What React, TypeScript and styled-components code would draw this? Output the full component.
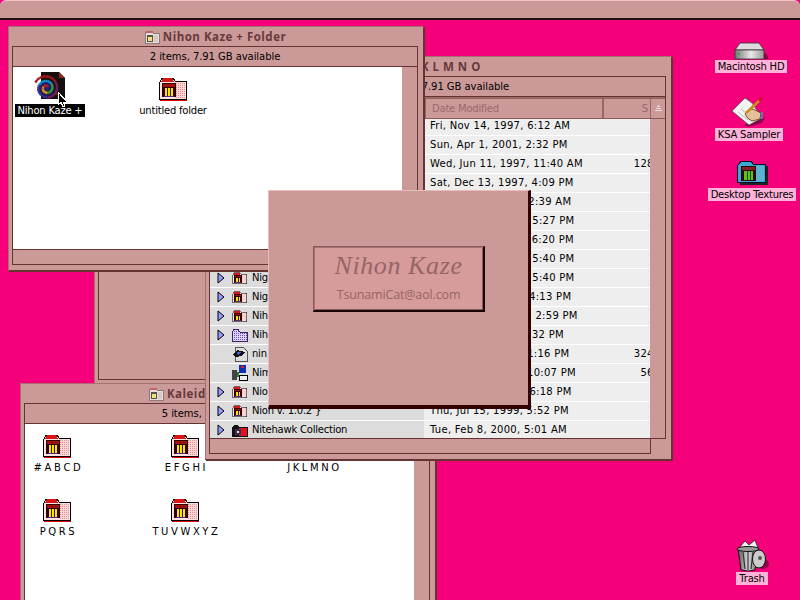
import React from "react";
import styled, { createGlobalStyle } from "styled-components";

const GlobalStyle = createGlobalStyle`
  html, body {
    margin: 0;
    padding: 0;
    width: 800px;
    height: 600px;
    overflow: hidden;
    background: #f5007a;
  }
  * { box-sizing: border-box; }
`;

const smallFont = `"DejaVu Sans", "Liberation Sans", sans-serif`;
const LINE = "#663333";
const BODY = "#cc9999";

const Desktop = styled.div`
  position: relative;
  width: 800px;
  height: 600px;
  overflow: hidden;
  background: #f5007a;
  font-family: ${smallFont};
  font-size: 10px;
  letter-spacing: -0.22px;
  color: #000;
`;

const MenuBar = styled.div`
  height: 20px;
  background: ${BODY};
  border-top: 1px solid #f0c4c4;
  border-bottom: 2px solid #221111;
  border-radius: 6px 6px 0 0;
`;

const Win = styled.div<{ $x: number; $y: number; $w: number; $h: number; $z: number }>`
  position: absolute;
  left: ${(p) => p.$x}px;
  top: ${(p) => p.$y}px;
  width: ${(p) => p.$w}px;
  height: ${(p) => p.$h}px;
  z-index: ${(p) => p.$z};
  display: flex;
  flex-direction: column;
  padding: 0 5px 5px 3px;
  background: ${BODY};
  border: 1px solid ${LINE};
  border-left-color: #a87070;
  border-top-color: #a87070;
  box-shadow: 1px 1px 0 ${LINE};
`;

const TitleBar = styled.div`
  height: 19px;
  flex: none;
  display: flex;
  align-items: center;
  justify-content: center;
  gap: 3px;
`;

const TitleText = styled.span`
  font-family: "Open Sans", "Liberation Sans", sans-serif;
  font-weight: 700;
  font-size: 11.5px;
  letter-spacing: 0.5px;
  color: #663a3a;
  white-space: pre;
`;

const Pane = styled.div`
  flex: 1;
  min-height: 0;
  display: flex;
  flex-direction: column;
  border: 1px solid ${LINE};
`;

const InfoBar = styled.div`
  height: 20px;
  flex: none;
  display: flex;
  align-items: center;
  justify-content: center;
  border-bottom: 1px solid ${LINE};
  letter-spacing: -0.06px;
  white-space: pre;
`;

const Body = styled.div`
  flex: 1;
  min-height: 0;
  display: flex;
`;

const WhiteArea = styled.div<{ $col: number; $gap: number }>`
  flex: 1;
  min-width: 0;
  background: #fff;
  display: grid;
  grid-template-columns: repeat(3, ${(p) => p.$col}px);
  grid-auto-rows: 64px;
  column-gap: ${(p) => p.$gap}px;
  align-content: start;
  padding-top: 9px;
  overflow: hidden;
`;

const ScrollTrack = styled.div`
  width: 15px;
  flex: none;
`;

const ScrollStrip = styled.div`
  height: 15px;
  flex: none;
  margin-right: 15px;
  border-left: 1px solid ${LINE};
  border-right: 1px solid ${LINE};
  border-bottom: 1px solid ${LINE};
`;

const FileItem = styled.div`
  display: flex;
  flex-direction: column;
  align-items: center;
`;

const IconSlot = styled.div`
  height: 25px;
  display: flex;
  align-items: flex-end;
  justify-content: center;
`;

const ItemLabel = styled.div<{ $selected?: boolean; $spaced?: boolean }>`
  margin-top: 3px;
  padding: 0 2px;
  height: 13px;
  line-height: 13px;
  white-space: pre;
  color: ${(p) => (p.$selected ? "#fff" : "#000")};
  background: ${(p) => (p.$selected ? "#000" : "transparent")};
  letter-spacing: ${(p) => (p.$spaced ? "-0.3px" : "inherit")};
`;

const Cursor = styled.svg`
  position: absolute;
  left: 57px;
  top: 92px;
  z-index: 9;
`;

/* list view */
const ColumnHeader = styled.div`
  height: 22px;
  flex: none;
  display: grid;
  grid-template-columns: 214px 178px 48px 1fr;
  border-top: 2px solid #996666;
  border-bottom: 1px solid #8a5a5a;
  color: #996a6a;
`;

const HeaderCell = styled.div<{ $end?: boolean }>`
  display: flex;
  align-items: center;
  padding: ${(p) => (p.$end ? "0 2px 0 0" : "0 0 0 6px")};
  justify-content: ${(p) => (p.$end ? "flex-end" : "flex-start")};
  border-left: 2px solid #996666;
  overflow: hidden;
`;

const SortCell = styled.div`
  display: flex;
  align-items: center;
  justify-content: center;
  border-left: 1px solid #996666;
`;

const ListClip = styled.div`
  flex: 1;
  min-width: 0;
  overflow: hidden;
`;

const RowStack = styled.div`
  margin-top: -2px;
`;

const Row = styled.div`
  width: 454px;
  height: 19px;
  display: grid;
  grid-template-columns: 214px 178px 62px;
  border-bottom: 1px solid #fff;
  line-height: 18px;
`;

const NameCell = styled.div`
  background: #dcdcdc;
  display: flex;
  align-items: center;
  overflow: hidden;
  white-space: pre;
`;

const Disclosure = styled.div`
  width: 22px;
  flex: none;
  padding-left: 7px;
  display: flex;
  align-items: center;
`;

const RowIcon = styled.div`
  width: 16px;
  height: 16px;
  flex: none;
  display: flex;
  align-items: center;
  justify-content: center;
  margin-right: 4px;
`;

const DateCell = styled.div`
  background: #eeeeee;
  padding-left: 6px;
  letter-spacing: 0.28px;
  white-space: pre;
`;

const SizeCell = styled.div`
  background: #eeeeee;
  text-align: right;
  letter-spacing: 0.28px;
  white-space: pre;
`;

/* about box */
const AboutBox = styled.div`
  position: absolute;
  left: 268px;
  top: 190px;
  width: 263px;
  height: 219px;
  z-index: 8;
  display: flex;
  justify-content: center;
  padding: 55px 0 0 1px;
  background: #cc9999;
  border-left: 1px solid #eebbbb;
  border-top: 1px solid #eebbbb;
  border-right: 3px solid #330000;
  border-bottom: 4px solid #330000;
`;

const Plate = styled.div`
  width: 172px;
  height: 66px;
  display: flex;
  flex-direction: column;
  align-items: center;
  background: #d69b9b;
  border-top: 1px solid #8a5a5a;
  border-left: 1px solid #8a5a5a;
  border-right: 2px solid #1a0505;
  border-bottom: 2px solid #1a0505;
  box-shadow: inset 1px 1px 0 #a87070, inset -1px -1px 0 #8a5a5a;
`;

const PlateTitle = styled.div`
  font-family: "Liberation Serif", serif;
  font-style: italic;
  font-size: 26px;
  line-height: 30px;
  letter-spacing: 0.6px;
  color: #966666;
  margin-top: 4px;
`;

const PlateMail = styled.div`
  font-family: "Open Sans", "Liberation Sans", sans-serif;
  font-size: 12.5px;
  line-height: 16px;
  letter-spacing: -0.15px;
  color: #966666;
  margin-top: 6px;
`;

/* desktop icons */
const DeskIcon = styled.div<{ $x: number; $y: number }>`
  position: absolute;
  left: ${(p) => p.$x}px;
  top: ${(p) => p.$y}px;
  width: 100px;
  display: flex;
  flex-direction: column;
  align-items: center;
`;

const DeskLabel = styled.div<{ $top: number }>`
  margin-top: ${(p) => p.$top}px;
  height: 13px;
  line-height: 13px;
  padding: 0 3px;
  background: #ffb3d9;
  white-space: pre;
`;

const Pixel = styled.svg`
  display: block;
  flex: none;
`;

const FolderIcon: React.FC<{ id: string; w?: number }> = ({ id, w = 30 }) => (
  <Pixel width={w} height={(w * 24) / 30} viewBox="0 0 30 24" shapeRendering="crispEdges">
    <defs>
      <pattern id={id} width="2" height="2" patternUnits="userSpaceOnUse">
        <rect width="2" height="2" fill="#f8d8d8" />
        <rect width="1" height="1" fill="#e88" />
      </pattern>
    </defs>
    <path d="M2 8 L5 3 H17 V5 H29 V24 H2Z" fill="#e00000" />
    <path d="M1 7 L4 1 H15 L17 4 H28 V22 H1Z" fill="#fbe4e4" stroke="#000" />
    <rect x="17" y="5" width="10" height="16" fill={`url(#${id})`} />
    <path d="M5 1 H14 L16 5 H3Z" fill="#d81818" />
    <rect x="4" y="6" width="14" height="14" fill="#300" />
    <rect x="5" y="7" width="12" height="3" fill="#a01010" />
    <rect x="7" y="11" width="8" height="8" fill="#ffe000" />
    <rect x="9" y="11" width="1" height="8" fill="#222" />
    <rect x="12" y="11" width="1" height="8" fill="#222" />
    <rect x="6" y="19" width="10" height="1" fill="#5a2a7a" />
  </Pixel>
);

const GreyFolder: React.FC = () => (
  <Pixel width="16" height="14" viewBox="0 0 16 14" shapeRendering="crispEdges">
    <path d="M1 4 L3 1 H8 L9 3 H15 V13 H1Z" fill="#e8dcdc" stroke="#8a7a7a" />
    <rect x="3" y="1" width="5" height="2" fill="#d06060" />
    <rect x="3" y="5" width="6" height="7" fill="#554" />
    <rect x="4" y="7" width="4" height="4" fill="#f0e080" />
    <rect x="10" y="5" width="4" height="7" fill="#d8c8c8" />
  </Pixel>
);

const PurpleFolder: React.FC = () => (
  <Pixel width="16" height="13" viewBox="0 0 16 13" shapeRendering="crispEdges">
    <defs>
      <pattern id="pd" width="2" height="2" patternUnits="userSpaceOnUse">
        <rect width="2" height="2" fill="#ddd0ff" />
        <rect width="1" height="1" fill="#6a50b0" />
      </pattern>
    </defs>
    <path d="M0.5 12.5 V2.5 L2 0.5 H6 L8 3 H15.5 V12.5Z" fill="url(#pd)" stroke="#402060" />
  </Pixel>
);

const RedFolder: React.FC = () => (
  <Pixel width="16" height="13" viewBox="0 0 16 13" shapeRendering="crispEdges">
    <path d="M0 13 V3 L2 1 H6 L7 3 H16 V13Z" fill="#111" />
    <rect x="7" y="4" width="8" height="8" fill="#e01020" />
    <rect x="3" y="5" width="6" height="6" fill="#403050" />
    <rect x="5" y="7" width="2" height="2" fill="#ddd" />
  </Pixel>
);

const DiscFile: React.FC = () => (
  <Pixel width="16" height="16" viewBox="0 0 16 16" shapeRendering="crispEdges">
    <path d="M3 1 H11 L15 5 V15 H3Z" fill="#ddd" stroke="#555" />
    <path d="M1 8 L5 4 L13 6 L10 10 L3 11Z" fill="#111" />
    <path d="M5 6 L10 6 L6 9Z" fill="#4060d0" />
  </Pixel>
);

const AppFile: React.FC = () => (
  <Pixel width="16" height="16" viewBox="0 0 16 16" shapeRendering="crispEdges">
    <rect x="0" y="5" width="5" height="10" fill="#444" />
    <rect x="7" y="10" width="8" height="5" fill="#eee" stroke="#000" />
    <rect x="7" y="0" width="7" height="8" fill="#1030b0" />
    <rect x="9" y="1" width="3" height="2" fill="#d02020" />
    <rect x="5" y="7" width="2" height="5" fill="#208030" />
  </Pixel>
);

// rainbow swirl built from short arcs, outer tail first
const swirlColors = ["#a01a1a", "#7a1a60", "#3a2a90", "#1090d0", "#30a030", "#f0a010", "#d02020", "#3a2a90"];
const swirl = Array.from({ length: 64 }, (_, i) => {
  const point = (n: number) => {
    const t = n * 0.26;
    const r = 12.5 - n * 0.19;
    return `${(14.5 + r * Math.cos(t + 3.6)).toFixed(1)} ${(17 + r * Math.sin(t + 3.6)).toFixed(1)}`;
  };
  return { d: `M${point(i)} L${point(i + 1)}`, color: swirlColors[Math.floor(i / 8)] };
});

const SpiralDoc: React.FC = () => (
  <Pixel width="36" height="30" viewBox="0 0 36 30">
    <path d="M9 1 H27 L33 7 V28 H9Z" fill="#151111" />
    <path d="M27 1 L33 7 H27Z" fill="#8a2a1a" />
    <rect x="22" y="22" width="7" height="2" fill="#5a3010" />
    <circle cx="14.5" cy="17" r="8" fill="#202060" />
    {swirl.map((s) => (
      <path key={s.d} d={s.d} stroke={s.color} strokeWidth="2.4" fill="none" />
    ))}
  </Pixel>
);

const ArrowCursor: React.FC = () => (
  <Cursor width="12" height="17" viewBox="0 0 12 17" shapeRendering="crispEdges">
    <path d="M1 0 V13 L4 10 L6 15 L8 14 L6 10 H10Z" fill="#000" stroke="#fff" strokeWidth="1" />
  </Cursor>
);

const DriveIcon: React.FC = () => (
  <Pixel width="34" height="18" viewBox="0 0 34 18">
    <defs>
      <linearGradient id="hd" x1="0" x2="1" y1="0" y2="0">
        <stop offset="0" stopColor="#777" />
        <stop offset="0.55" stopColor="#e8e8e8" />
        <stop offset="1" stopColor="#999" />
      </linearGradient>
    </defs>
    <path d="M28 8 L34 14 V17 H30Z" fill="#90004a" />
    <path d="M1 8 L6 1 H25 L30 8Z" fill="#ddd" stroke="#333" strokeWidth="0.8" />
    <rect x="1" y="8" width="29" height="9" fill="url(#hd)" stroke="#333" strokeWidth="0.8" />
    <rect x="4" y="11" width="2" height="2" fill="#20c020" />
  </Pixel>
);

const SamplerIcon: React.FC = () => (
  <Pixel width="34" height="30" viewBox="0 0 34 30">
    <path d="M12 28 L33 20 L30 26 L16 30Z" fill="#90004a" />
    <path d="M0 14 L13 1 L20 6 L30 21 L17 28Z" fill="#f4f4f4" stroke="#555" strokeWidth="0.8" />
    <path d="M6 15 L16 23 M9 12 L19 20" stroke="#bbb" strokeWidth="1" />
    <path d="M13 17 Q16 12 21 12 L29 16 L28 22 L20 24 Q15 22 13 17Z" fill="#e6c09a" stroke="#5a3010" strokeWidth="0.8" />
    <path d="M14 16 L28 3" stroke="#c89020" strokeWidth="2.6" />
    <path d="M27 4 L30 1" stroke="#d01030" strokeWidth="3" />
    <rect x="29" y="15" width="2" height="7" fill="#6070c0" />
  </Pixel>
);

const TextureFolder: React.FC = () => (
  <Pixel width="31" height="25" viewBox="0 0 31 25" shapeRendering="crispEdges">
    <rect x="3" y="6" width="28" height="19" fill="#222" />
    <path d="M0.5 22.5 V6 L4 1 H14 L16 4 H28.5 V22.5Z" fill="#3aa8d0" stroke="#001020" />
    <rect x="16" y="6" width="11" height="15" fill="#5cb4d0" />
    <rect x="4" y="6" width="15" height="15" fill="#2a0a0a" />
    <rect x="5" y="7" width="13" height="3" fill="#802020" />
    <rect x="7" y="11" width="9" height="9" fill="#60c020" />
    <rect x="10" y="11" width="1" height="9" fill="#205010" />
    <rect x="13" y="11" width="1" height="9" fill="#205010" />
  </Pixel>
);

const TrashIcon: React.FC = () => (
  <Pixel width="34" height="32" viewBox="0 0 34 32">
    <defs>
      <linearGradient id="tc" x1="0" x2="1" y1="0" y2="0">
        <stop offset="0" stopColor="#555" />
        <stop offset="0.5" stopColor="#ddd" />
        <stop offset="1" stopColor="#666" />
      </linearGradient>
    </defs>
    <ellipse cx="28" cy="24" rx="6" ry="5" fill="#90004a" />
    <path d="M4 8 L10 1 L14 5 L20 0 L23 8Z" fill="#f4f4f4" stroke="#222" strokeWidth="0.8" />
    <path d="M3 9 L6 30 Q13 32 20 30 L23 9Z" fill="url(#tc)" stroke="#111" strokeWidth="1" />
    <ellipse cx="13" cy="9" rx="11" ry="2.5" fill="#999" stroke="#111" strokeWidth="1" />
    <path d="M8 12 L10 29 M13 12 V30 M18 12 L16 29" stroke="#333" strokeWidth="1.2" />
    <ellipse cx="24" cy="19" rx="6.5" ry="9" fill="#ccc" stroke="#111" strokeWidth="1" />
    <circle cx="25" cy="18" r="2" fill="#555" />
  </Pixel>
);

const RowTriangle: React.FC = () => (
  <Pixel width="8" height="12" viewBox="0 0 8 12">
    <path d="M1 1 L7 6 L1 11Z" fill="#9999ff" stroke="#000" strokeWidth="1" />
  </Pixel>
);

const SortArrow: React.FC = () => (
  <Pixel width="9" height="7" viewBox="0 0 9 7" shapeRendering="crispEdges">
    <path d="M4 0 H5 V1 H6 V2 H3 V1 H4Z" fill="#e8dcdc" />
    <rect x="2" y="3" width="5" height="1" fill="#e8dcdc" />
    <rect x="1" y="5" width="7" height="1" fill="#e8dcdc" />
  </Pixel>
);

type RowKind = "folder" | "purple" | "disc" | "app" | "red";

interface ListRow {
  name: string;
  date: string;
  size?: string;
  kind: RowKind;
}

const rows: ListRow[] = [
  { name: "Neon Genesis", date: "Fri, Nov 14, 1997, 6:12 AM", kind: "folder" },
  { name: "Neo Tokyo", date: "Sun, Apr 1, 2001, 2:32 PM", kind: "folder" },
  { name: "NetBlaster", date: "Wed, Jun 11, 1997, 11:40 AM", size: "128 K", kind: "app" },
  { name: "New Wave", date: "Sat, Dec 13, 1997, 4:09 PM", kind: "folder" },
  { name: "Nexus", date: "Tue, Jan 6, 1998, 12:39 AM", kind: "folder" },
  { name: "Nibbles", date: "Mon, Jan 12, 1998, 5:27 PM", kind: "folder" },
  { name: "Nice Day", date: "Sat, Nov 15, 1997, 6:20 PM", kind: "folder" },
  { name: "Niels", date: "Thu, Feb 19, 1998, 5:40 PM", kind: "folder" },
  { name: "Nightfall", date: "Thu, Feb 19, 1998, 5:40 PM", kind: "folder" },
  { name: "Nightmare", date: "Mon, Mar 2, 1998, 4:13 PM", kind: "folder" },
  { name: "Nihon", date: "Sun, May 10, 1998, 2:59 PM", kind: "folder" },
  { name: "Nihon Kaze +", date: "Fri, May 1, 1998, 2:32 PM", kind: "purple" },
  { name: "nin", date: "Fri, Aug 8, 1997, 11:16 PM", size: "324 K", kind: "disc" },
  { name: "Nimbus", date: "Sun, Mar 1, 1998, 10:07 PM", size: "56 K", kind: "app" },
  { name: "Nion", date: "Sat, Oct 17, 1998, 6:18 PM", kind: "folder" },
  { name: "Nion v. 1.0.2 }", date: "Thu, Jul 15, 1999, 5:52 PM", kind: "folder" },
  { name: "Nitehawk Collection", date: "Tue, Feb 8, 2000, 5:01 AM", kind: "red" },
];

const renderRowIcon = (kind: RowKind, i: number) => {
  if (kind === "purple") return <PurpleFolder />;
  if (kind === "disc") return <DiscFile />;
  if (kind === "app") return <AppFile />;
  if (kind === "red") return <RedFolder />;
  return <FolderIcon id={`row-${i}`} w={16} />;
};

const kaleidItems = ["# A B C D", "E F G H I", "J K L M N O", "P Q R S", "T U V W X Y Z"];

export default function App() {
  return (
    <Desktop>
      <GlobalStyle />
      <MenuBar />

      <DeskIcon $x={701} $y={42}>
        <DriveIcon />
        <DeskLabel $top={0}>Macintosh HD</DeskLabel>
      </DeskIcon>
      <DeskIcon $x={699} $y={97}>
        <SamplerIcon />
        <DeskLabel $top={1}>KSA Sampler</DeskLabel>
      </DeskIcon>
      <DeskIcon $x={702} $y={160}>
        <TextureFolder />
        <DeskLabel $top={3}>Desktop Textures</DeskLabel>
      </DeskIcon>
      <DeskIcon $x={702} $y={540}>
        <TrashIcon />
        <DeskLabel $top={0}>Trash</DeskLabel>
      </DeskIcon>

      <Win $x={94} $y={200} $w={300} $h={186} $z={1}>
        <TitleBar />
        <Pane />
      </Win>

      <Win $x={20} $y={383} $w={416} $h={300} $z={2}>
        <TitleBar>
          <GreyFolder />
          <TitleText>Kaleidoscope Schemes</TitleText>
        </TitleBar>
        <Pane>
          <InfoBar>5 items, 7.91 GB available</InfoBar>
          <Body>
            <WhiteArea $col={64} $gap={64}>
              {kaleidItems.map((label, i) => (
                <FileItem key={label}>
                  <IconSlot>
                    <FolderIcon id={`kal-${i}`} />
                  </IconSlot>
                  <ItemLabel $spaced>{label}</ItemLabel>
                </FileItem>
              ))}
            </WhiteArea>
            <ScrollTrack />
          </Body>
        </Pane>
        <ScrollStrip />
      </Win>

      <Win $x={205} $y={56} $w={467} $h={404} $z={3}>
        <TitleBar>
          <GreyFolder />
          <TitleText>J K L M N O</TitleText>
        </TitleBar>
        <Pane>
          <InfoBar>123 items, 7.91 GB available</InfoBar>
          <ColumnHeader>
            <HeaderCell>Name</HeaderCell>
            <HeaderCell>Date Modified</HeaderCell>
            <HeaderCell $end>S</HeaderCell>
            <SortCell>
              <SortArrow />
            </SortCell>
          </ColumnHeader>
          <Body>
            <ListClip>
              <RowStack>
                {rows.map((r, i) => (
                  <Row key={r.name}>
                    <NameCell>
                      <Disclosure>{r.kind === "disc" || r.kind === "app" ? null : <RowTriangle />}</Disclosure>
                      <RowIcon>{renderRowIcon(r.kind, i)}</RowIcon>
                      {r.name}
                    </NameCell>
                    <DateCell>{r.date}</DateCell>
                    <SizeCell>{r.size}</SizeCell>
                  </Row>
                ))}
              </RowStack>
            </ListClip>
            <ScrollTrack />
          </Body>
        </Pane>
        <ScrollStrip />
      </Win>

      <Win $x={8} $y={26} $w={416} $h={245} $z={4}>
        <TitleBar>
          <GreyFolder />
          <TitleText>Nihon Kaze + Folder</TitleText>
        </TitleBar>
        <Pane>
          <InfoBar>2 items, 7.91 GB available</InfoBar>
          <Body>
            <WhiteArea $col={74} $gap={49}>
              <FileItem>
                <IconSlot>
                  <SpiralDoc />
                </IconSlot>
                <ItemLabel $selected>Nihon Kaze +</ItemLabel>
              </FileItem>
              <FileItem>
                <IconSlot>
                  <FolderIcon id="a-folder" />
                </IconSlot>
                <ItemLabel>untitled folder</ItemLabel>
              </FileItem>
            </WhiteArea>
            <ScrollTrack />
          </Body>
        </Pane>
        <ScrollStrip />
      </Win>

      <ArrowCursor />

      <AboutBox>
        <Plate>
          <PlateTitle>Nihon Kaze</PlateTitle>
          <PlateMail>TsunamiCat@aol.com</PlateMail>
        </Plate>
      </AboutBox>
    </Desktop>
  );
}
